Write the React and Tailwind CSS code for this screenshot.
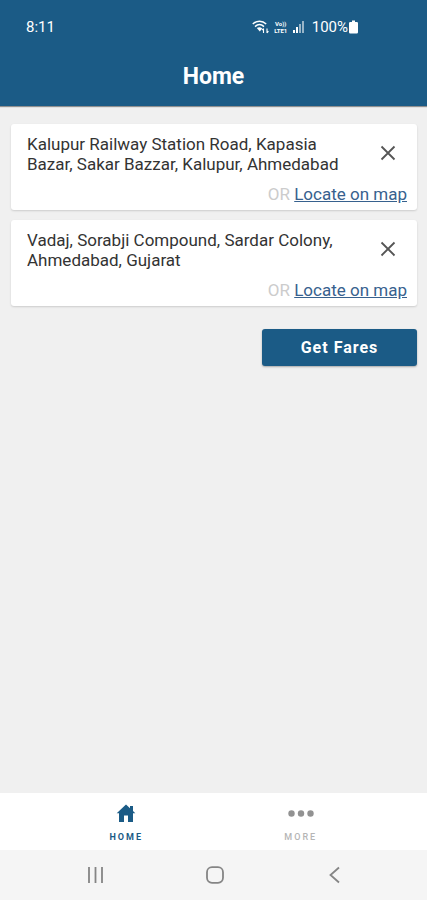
import { useState } from 'react';

const STOPS = [
  {
    id: 'pickup',
    label: 'Pickup address',
    address: 'Kalupur Railway Station Road, Kapasia Bazar, Sakar Bazzar, Kalupur, Ahmedabad',
  },
  {
    id: 'drop',
    label: 'Drop address',
    address: 'Vadaj, Sorabji Compound, Sardar Colony, Ahmedabad, Gujarat',
  },
];

function StatusBar() {
  return (
    <div className="flex items-center justify-between pt-[15px] pr-[69px] pl-[26px] text-[15px] leading-6">
      <span>8:11</span>
      <div className="flex items-center">
        <svg className="mr-1 h-4 w-[17px]" viewBox="0 0 17 16" fill="none" stroke="currentColor">
          <path d="M0.8 5C4.6 1.3 10.4 1.3 14.2 5" strokeWidth="1.5" />
          <path d="M3 7.6C5.8 5.1 9.2 5.1 12 7.6" strokeWidth="1.5" />
          <path d="M4.8 9L7.8 12.4L10.2 9.4C8.6 7.8 6.6 7.8 4.8 9Z" fill="currentColor" stroke="none" />
          <path d="M11.5 14V9.5M10 11.2L11.5 9.5M15 9.5V14M16.4 12.2L15 14" strokeWidth="1.1" />
        </svg>
        <span className="mr-1 flex w-4 flex-col items-center text-[6px] leading-[7px] font-bold">
          <span>Vo))</span>
          <span>LTE1</span>
        </span>
        <svg className="mr-2 h-3 w-[11px]" viewBox="0 0 11 12" fill="currentColor">
          <rect x="0" y="9" width="2" height="3" />
          <rect x="3" y="6" width="2" height="6" />
          <rect x="6" y="3" width="2" height="9" opacity="0.55" />
          <rect x="9" y="0" width="2" height="12" opacity="0.55" />
        </svg>
        <span>100%</span>
        <svg className="ml-px h-[14px] w-[9px]" viewBox="0 0 9 14" fill="currentColor">
          <path d="M3 0.5h3v1.5h1.5A1.3 1.3 0 0 1 9 3.3v9A1.3 1.3 0 0 1 7.7 13.6H1.3A1.3 1.3 0 0 1 0 12.3v-9A1.3 1.3 0 0 1 1.3 2H3z" />
        </svg>
      </div>
    </div>
  );
}

function AddressCard({ stop, value, onChange }) {
  return (
    <div className="rounded-[3px] bg-white pt-[10px] pr-[10px] pb-1 pl-4 shadow-[0_1px_2px_rgba(0,0,0,0.15)]">
      <div className="flex items-start justify-between">
        <textarea
          aria-label={stop.label}
          rows={2}
          value={value}
          onChange={(e) => onChange(e.target.value)}
          className="block w-80 resize-none overflow-hidden text-[17px] leading-5 text-[#333333] outline-none"
        />
        <button
          type="button"
          aria-label={`Clear ${stop.label}`}
          onClick={() => onChange('')}
          className="mt-[10px] mr-[10px] shrink-0 text-[#555555]"
        >
          <svg className="h-[18px] w-[18px]" viewBox="0 0 18 18" fill="none" stroke="currentColor" strokeWidth="1.8">
            <path d="M2.5 2.5L15.5 15.5M15.5 2.5L2.5 15.5" />
          </svg>
        </button>
      </div>
      <p className="mt-2 text-right text-[17px] leading-6 text-[#cccccc]">
        OR{' '}
        <a href="#map" className="text-[#37618e] underline">Locate on map</a>
      </p>
    </div>
  );
}

export default function App() {
  const [addresses, setAddresses] = useState({
    pickup: STOPS[0].address,
    drop: STOPS[1].address,
  });

  return (
    <div className="flex min-h-screen flex-col bg-[#f0f0f0] font-['Roboto',sans-serif]">
      <header className="h-[106px] bg-[#1b5b86] text-white shadow-[0_1px_1px_rgba(0,0,0,0.4)]">
        <StatusBar />
        <h1 className="mt-[22px] text-center text-[23px] leading-8 font-bold">Home</h1>
      </header>

      <main className="flex flex-1 flex-col gap-[10px] pt-[18px] pr-[10px] pl-[11px]">
        {STOPS.map((stop) => (
          <AddressCard
            key={stop.id}
            stop={stop}
            value={addresses[stop.id]}
            onChange={(text) => setAddresses({ ...addresses, [stop.id]: text })}
          />
        ))}
        <button
          type="button"
          className="mt-[13px] h-[37px] w-[155px] self-end rounded-[3px] bg-[#1b5b86] pt-px text-base font-bold tracking-[1px] text-white shadow-[0_1px_2px_rgba(0,0,0,0.3)]"
        >
          Get Fares
        </button>
      </main>

      <nav className="flex h-[57px] bg-white px-[39px] text-[9px] leading-3 font-bold tracking-[2px]">
        <a href="#home" className="flex flex-1 flex-col items-center pt-[10px] text-[#1b5b86]">
          <svg className="h-5 w-5" viewBox="0 0 20 20" fill="currentColor">
            <path d="M10 1.5L0.7 10.3H3V19H8V12.5H12V19H17V10.3H19.3L17 8.1V3H14V5.3Z" />
          </svg>
          <span className="mt-2">HOME</span>
        </a>
        <a href="#more" className="flex flex-1 flex-col items-center pt-[10px] text-[#b5b5b5]">
          <svg className="h-5 w-[26px]" viewBox="0 0 26 20" fill="#929292">
            <circle cx="3.5" cy="10.5" r="3.2" />
            <circle cx="13" cy="10.5" r="3.2" />
            <circle cx="22.5" cy="10.5" r="3.2" />
          </svg>
          <span className="mt-2 font-medium">MORE</span>
        </a>
      </nav>

      <div className="grid h-[50px] grid-cols-3 items-center justify-items-center bg-[#f5f5f5] pr-8 pl-9 text-[#858585]">
        <button type="button" aria-label="Recent apps">
          <svg className="h-[18px] w-[18px]" viewBox="0 0 18 18" fill="none" stroke="currentColor" strokeWidth="1.8">
            <path d="M2 1V17M8.5 1V17M15 1V17" />
          </svg>
        </button>
        <button type="button" aria-label="Home screen">
          <svg className="h-[18px] w-[18px]" viewBox="0 0 18 18" fill="none" stroke="currentColor" strokeWidth="1.8">
            <rect x="1" y="1.2" width="16" height="15.6" rx="5" />
          </svg>
        </button>
        <button type="button" aria-label="Back">
          <svg className="h-[18px] w-[18px]" viewBox="0 0 18 18" fill="none" stroke="currentColor" strokeWidth="1.8">
            <path d="M13 1.5L4.5 9L13 16.5" />
          </svg>
        </button>
      </div>
    </div>
  );
}
